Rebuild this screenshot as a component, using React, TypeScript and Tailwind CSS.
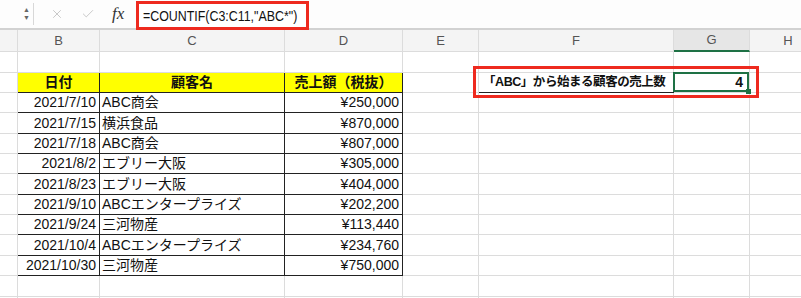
import { X, Check } from "lucide-react";

const cols = [
  { key: "rh", label: "", w: "w-[18px]" },
  { key: "B", label: "B", w: "w-[82px]" },
  { key: "C", label: "C", w: "w-[185px]" },
  { key: "D", label: "D", w: "w-[118px]" },
  { key: "E", label: "E", w: "w-[76px]" },
  { key: "F", label: "F", w: "w-[195px]" },
  { key: "G", label: "G", w: "w-[76px]" },
  { key: "H", label: "H", w: "w-[77px]" },
];

const rowHeights = [
  "h-[21px]", "h-[20px]", "h-[20px]", "h-[21px]", "h-[20px]", "h-[20px]", "h-[21px]",
  "h-[20px]", "h-[20px]", "h-[21px]", "h-[20px]", "h-[21px]", "h-[20px]",
];

const sales = [
  ["2021/7/10", "ABC商会", "¥250,000"],
  ["2021/7/15", "横浜食品", "¥870,000"],
  ["2021/7/18", "ABC商会", "¥807,000"],
  ["2021/8/2", "エブリー大阪", "¥305,000"],
  ["2021/8/23", "エブリー大阪", "¥404,000"],
  ["2021/9/10", "ABCエンタープライズ", "¥202,200"],
  ["2021/9/24", "三河物産", "¥113,440"],
  ["2021/10/4", "ABCエンタープライズ", "¥234,760"],
  ["2021/10/30", "三河物産", "¥750,000"],
];

const GRID = "border-[#dcdcdc]";
const INK = "border-[#222]";

// row index 0 = sheet row 1, 1 = table header, 2..10 = data
const inTable = (r: number, c: string) => r >= 1 && r <= 10 && ["B", "C", "D"].includes(c);

function Cell({ r, c }: { r: number; c: string }) {
  let right = GRID;
  let bottom = GRID;
  let bg = "";
  let body: React.ReactNode = null;
  const w = cols.find((x) => x.key === c)!.w;

  if (inTable(r, c)) {
    right = INK;
    bottom = INK;
  }
  if (r === 0 && ["B", "C", "D", "F", "G"].includes(c)) bottom = INK;
  if (c === "rh" && r >= 1 && r <= 10) right = INK;

  if (r === 1 && ["B", "C", "D"].includes(c)) {
    bg = "bg-[#ffff00]";
    const text = c === "B" ? "日付" : c === "C" ? "顧客名" : "売上額（税抜）";
    body = <span className="w-full text-center font-bold">{text}</span>;
  }
  if (r >= 2 && r <= 10) {
    const row = sales[r - 2];
    if (c === "B") body = <span className="w-full pr-[3px] text-right">{row[0]}</span>;
    if (c === "C") body = <span className="w-full pl-[2px]">{row[1]}</span>;
    if (c === "D") body = <span className="w-full pr-[3px] text-right">{row[2]}</span>;
  }

  if (r === 1 && c === "E") right = INK;
  if (r === 1 && c === "F") {
    right = INK;
    bottom = INK;
    body = (
      <span className="w-full pl-[4px] text-[12.5px] font-bold tracking-[-0.45px]">
        「ABC」から始まる顧客の売上数
      </span>
    );
  }
  if (r === 1 && c === "G") {
    return (
      <div className={`relative flex shrink-0 items-center border-r border-b ${GRID} ${w}`}>
        <span className="w-full pr-[6px] text-right font-bold">4</span>
        <div className="absolute -top-px -left-px right-0 bottom-0 border-2 border-[#1e7145]" />
        <div className="absolute -right-[2px] -bottom-[2px] h-[5px] w-[5px] bg-[#1e7145]" />
      </div>
    );
  }

  return (
    <div className={`flex shrink-0 items-center whitespace-nowrap border-r border-b ${right} ${bottom} ${bg} ${w}`}>
      {body}
    </div>
  );
}

export default function App() {
  return (
    <div
      className="relative h-[298px] w-[801px] overflow-hidden bg-white text-[14px] text-[#111]"
      style={{ fontFamily: '"Liberation Sans", "Noto Sans CJK JP", sans-serif' }}
    >
      {/* formula bar */}
      <div className="flex h-[30px] items-start border-b-2 border-[#d2d2d2] bg-[#fdfdfd]">
        <div className="flex h-[28px] w-[33px] shrink-0 flex-col items-end justify-center pr-[3px] text-[7px] leading-[8px] text-[#666]">
          <span>▲</span>
          <span>▼</span>
        </div>
        <div className="mt-[3px] h-[22px] w-px shrink-0 bg-[#d8d8d8]" />
        <div className="flex h-[28px] shrink-0 items-center gap-[17px] pl-[16px] text-[#bdbdbd]">
          <X size={14} strokeWidth={1.4} />
          <Check size={14} strokeWidth={1.4} />
        </div>
        <div
          className="flex h-[28px] w-[41px] shrink-0 items-center pl-[17px] text-[17px] italic text-[#333]"
          style={{ fontFamily: '"Liberation Serif", serif' }}
        >
          fx
        </div>
        <div className="relative z-10 mt-px flex h-[29px] w-[173px] shrink-0 items-center overflow-hidden border-[3px] border-[#ee2a1f] bg-white pl-[4px]">
          <span className="origin-left scale-x-[0.8] whitespace-nowrap text-[15.5px] text-[#111]">
            =COUNTIF(C3:C11,"ABC*")
          </span>
        </div>
      </div>

      {/* column headers */}
      <div className="flex h-[22px] bg-[#f4f4f4] text-[13px] text-[#555]">
        {cols.map((c) => (
          <div
            key={c.key}
            className={`flex shrink-0 items-center justify-center border-r ${GRID} ${c.w} ${
              c.key === "G" ? "border-b-2 border-b-[#1e7145] bg-[#e6e6e6]" : "border-b"
            }`}
          >
            {c.label}
          </div>
        ))}
      </div>

      {/* sheet rows */}
      {rowHeights.map((h, r) => (
        <div key={r} className={`flex ${h}`}>
          {cols.map((c) => (
            <Cell key={c.key} r={r} c={c.key} />
          ))}
        </div>
      ))}

      {/* annotation box */}
      <div className="absolute left-[473px] top-[66px] h-[32px] w-[286px] border-[3px] border-[#ee2a1f]" />
    </div>
  );
}
